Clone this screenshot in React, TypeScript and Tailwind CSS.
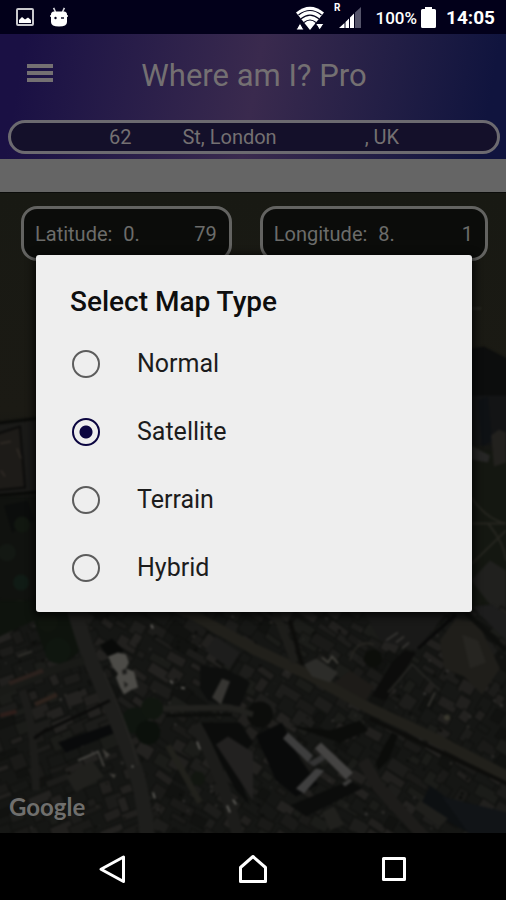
import React, { useState } from 'react';

const MAP_TYPES = ['Normal', 'Satellite', 'Terrain', 'Hybrid'];

// --- Map scenery ---
type Block = { x: number; y: number; w: number; h: number; angle: number; fill: string };

const ROOFS = ['#1a1a18', '#1d1d1b', '#21201e', '#161715', '#1c1c1a', '#111210', '#1b1c19', '#232220'];

const makeRandom = (start: number) => {
  let seed = start;
  return () => {
    seed = (seed * 16807) % 2147483647;
    return seed / 2147483647;
  };
};

const buildRoofs = () => {
  const rand = makeRandom(421);
  const blocks: Block[] = [];
  for (let y = 604; y < 840; y += 15) {
    for (let x = -6; x < 512; x += 18) {
      const westSide = x < 78 + (y - 615) * 0.34;
      blocks.push({
        x: x + rand() * 8 - 4,
        y: y + rand() * 6 - 3,
        w: 8 + rand() * 18,
        h: 5 + rand() * 11,
        angle: westSide ? -24 + rand() * 6 : 28 + rand() * 8,
        fill: ROOFS[Math.floor(rand() * ROOFS.length)],
      });
    }
  }
  return blocks;
};

const buildSpecks = () => {
  const rand = makeRandom(97);
  return Array.from({ length: 260 }, () => ({
    x: rand() * 506,
    y: 612 + rand() * 220,
    r: 1 + rand() * 2,
    angle: rand() * 90,
    fill: ['#0b0c0a', '#2b2a28', '#282724', '#0d0e0c', '#343331'][Math.floor(rand() * 5)],
  }));
};

const roofs = buildRoofs();
const specks = buildSpecks();

const SatelliteMap = () => (
  <svg
    className="absolute inset-0 h-full w-full"
    viewBox="0 192 506 641"
    preserveAspectRatio="xMidYMid slice"
    aria-hidden="true"
  >
    <defs>
      <linearGradient id="land" x1="0" y1="0" x2="0" y2="1">
        <stop offset="0" stopColor="#181913" />
        <stop offset="0.34" stopColor="#1b1a14" />
        <stop offset="0.4" stopColor="#151613" />
        <stop offset="1" stopColor="#141513" />
      </linearGradient>
      <filter id="soft" colorInterpolationFilters="sRGB">
        <feGaussianBlur stdDeviation="0.9" />
      </filter>
    </defs>
    <rect y="192" width="506" height="641" fill="url(#land)" />

    <g filter="url(#soft)">
      {/* west edge */}
      <path d="M-9 423 L45 417 V494 L-9 494Z" fill="#1a1a18" />
      <path d="M-5 434 L20 426 L25 487 L-5 490" fill="#1d1b18" stroke="#0b0b0a" strokeWidth="2" />
      <path d="M-5 423 L45 417 M-5 495 L45 491" stroke="#090a08" strokeWidth="3" />
      <path d="M0 443 L11 441 M17 448 L21 458 M1 470 L5 476" stroke="#2e2924" strokeWidth="2" />
      <path d="M-9 496 H45 V620 H-9Z" fill="#10120f" />
      <path d="M4 505 L28 500 L34 520 L12 532Z" fill="#0b0d0c" />
      <circle cx="22" cy="524" r="8" fill="#111710" />
      <circle cx="7" cy="552" r="9" fill="#131813" />
      <circle cx="21" cy="582" r="8" fill="#101b15" />
      <circle cx="20" cy="606" r="6" fill="#1d2019" />

      {/* east edge */}
      <path d="M465 349 L484 346 L515 362 V400 H465Z" fill="#0c0d0d" />
      <path d="M465 395 H515 V445 H465Z" fill="#131415" />
      <path d="M478 400 L488 396 L492 440 L482 446Z" fill="#0e1114" />
      <path d="M465 450 H515 V620 H465Z" fill="#141711" />
      <path d="M471 445 L490 455 L488 462 L471 459Z" fill="#262625" />
      <path d="M491 435 l8 -6 7 3 v30 l-12 4Z" fill="#22211e" />
      <path d="M471 497 Q488 520 506 523 M471 523 H506 M471 564 L506 530 M488 523 Q504 542 506 560" stroke="#25251f" strokeWidth="2" fill="none" />
      <path d="M471 580 L506 624 V570 L490 560Z" fill="#20201e" />
      <path d="M471 308 h10" stroke="#2a2a25" strokeWidth="2" />
    </g>

    <g filter="url(#soft)">
      <rect x="-9" y="611" width="524" height="232" fill="#151614" />
      {roofs.map((b, i) => (
        <rect
          key={i}
          x={b.x}
          y={b.y}
          width={b.w}
          height={b.h}
          fill={b.fill}
          stroke="#10110f"
          strokeWidth="1"
          transform={`rotate(${b.angle} ${b.x} ${b.y})`}
        />
      ))}
      {specks.map((s, i) => (
        <rect key={i} x={s.x} y={s.y} width={s.r} height={s.r} fill={s.fill} transform={`rotate(${s.angle} ${s.x} ${s.y})`} />
      ))}

      {/* trees */}
      <path d="M-9 600 H34 L72 612 L80 650 L62 666 L44 650 L34 620 L-9 640Z" fill="#0e130d" />
      <circle cx="58" cy="650" r="13" fill="#0f160f" />
      <circle cx="48" cy="622" r="10" fill="#10150e" />
      <circle cx="135" cy="720" r="13" fill="#0f150f" />
      <circle cx="152" cy="708" r="11" fill="#10160f" />
      <circle cx="148" cy="732" r="12" fill="#0b100b" />
      <circle cx="198" cy="778" r="7" fill="#121610" />

      {/* shadows */}
      <path d="M100 645 L112 638 L124 650 L112 662Z" fill="#090a09" />
      <path d="M58 742 L110 724 L116 732 L66 752Z" fill="#090a0b" />
      <path d="M196 722 L240 722 L253 742 L235 765 L250 805 L236 790 L212 745Z" fill="#0b0c0b" />
      <path d="M200 665 L225 668 L250 682 L240 706 L208 700 L200 688Z" fill="#0d0e0d" />
      <path d="M256 735 L282 722 L298 755 L318 784 L296 796 L276 780Z" fill="#090a0a" />
      <path d="M290 725 L340 742 L368 730 L360 720 L330 730Z" fill="#0b0c0a" />
      <path d="M416 652 L386 700 L372 695 L392 662 L404 650Z" fill="#0c0c0b" />
      <path d="M398 735 L388 760 L378 770 L376 762 L392 732Z" fill="#0b0c0a" />
      <path d="M290 805 L350 780 L362 788 L306 816Z" fill="#0b0c0b" />
      <path d="M430 785 L478 820 L470 833 L420 806Z" fill="#0d1012" />
      <circle cx="260" cy="714" r="13" fill="#0c0d0b" />
      <circle cx="373" cy="658" r="9" fill="#0c0e0a" />

      {/* streets */}
      <path d="M72 600 Q84 645 96 672 Q118 722 134 765 Q144 795 148 843" stroke="#1e1e1c" strokeWidth="15" fill="none" />
      <path d="M104 672 Q128 724 138 765" stroke="#2a2926" strokeWidth="1" fill="none" />
      <path d="M84 660 Q52 668 -6 694" stroke="#191a17" strokeWidth="8" fill="none" />
      <path d="M22 690 Q34 720 36 790" stroke="#1c1c1a" strokeWidth="8" fill="none" />
      <path d="M182 608 L253 648 L310 675 L370 708 L430 736 L515 780" stroke="#21201b" strokeWidth="11" fill="none" />
      <path d="M275 610 L295 662" stroke="#1d1d1a" strokeWidth="8" fill="none" />
      <path d="M290 620 L302 664 M370 718 L515 787" stroke="#0d0d0b" strokeWidth="4" fill="none" />
      <path d="M163 708 L230 707 L253 714" stroke="#21211e" strokeWidth="6" fill="none" />
      <path d="M166 715 L232 714" stroke="#0c0d0b" strokeWidth="3" />
      <path d="M168 745 L200 802" stroke="#21211c" strokeWidth="6" />
      <path d="M195 724 Q222 770 240 843" stroke="#1c1c1a" strokeWidth="12" fill="none" />
      <path d="M363 760 L378 786 L430 843" stroke="#1d1c1a" strokeWidth="12" fill="none" />
      <path d="M388 692 L412 664 L440 690" stroke="#232320" strokeWidth="2" fill="none" />
      <path d="M350 660 Q356 638 374 644" stroke="#262521" strokeWidth="2" fill="none" />

      {/* open ground on the east side */}
      <path d="M360 605 L452 605 L416 650 L380 640Z" fill="#191918" />
      <path d="M418 648 L456 614" stroke="#090909" strokeWidth="3" />
      <path d="M440 640 L456 618 L478 622 L500 668 L482 694 L464 676 L444 668Z" fill="#1f1e1a" />
      <path d="M462 634 L478 640 L486 662 L470 668Z" fill="#262521" />
      <path d="M466 612 L506 650" stroke="#0d0e0c" strokeWidth="5" />
      <path d="M472 606 L515 649 V620 L492 604Z" fill="#1d1d1d" />

      {/* terraces */}
      <path d="M8 681 L42 668 L44 672 L10 685Z" fill="#2b211d" />
      <path d="M34 702 L56 692 L58 696 L36 706Z" fill="#2e231d" />
      <path d="M0 713 L16 709 L17 713 L0 717Z" fill="#2f1e1a" />
      <path d="M18 656 l14 -5" stroke="#302f2b" strokeWidth="2" />
      <path d="M42 732 L110 700 M34 738 L48 728" stroke="#0b0b0a" strokeWidth="3" />
      <path d="M66 776 L92 760 L104 776 L76 792Z" fill="#20201d" />
      <path d="M78 760 L98 751 L104 766" stroke="#454440" strokeWidth="2" fill="none" />
      <path d="M109 773 l7 1 -2 4Z M102 748 l8 6 -4 4Z" fill="#403e3a" />
      <path d="M216 744 L228 736 L253 752 V800Z" fill="#222120" />
      <path d="M205 650 L216 636 L240 652 L230 668Z" fill="#1d1d1c" />
      <path d="M212 697 L222 678 L230 681 L221 704Z" fill="#363532" />
      <path d="M304 664 L316 658 L338 672 L330 682 L312 676Z" fill="#2c2c29" />
      <path d="M322 657 l6 5 4 -6 6 7" stroke="#403f3a" strokeWidth="2" fill="none" />
      <path d="M386 640 l12 -8 M396 642 l8 -6 M402 648 l7 -6" stroke="#353431" strokeWidth="2" />
      <path d="M334 682 L350 670 L374 686 L366 700Z" fill="#1d1b18" />
      <path d="M322 812 L334 806 L344 824 L330 830Z" fill="#20201d" />
      <path d="M442 796 L515 814 V843 H476Z" fill="#111417" />
      <path d="M428 706 l7 -14" stroke="#33322e" strokeWidth="2" />
      <circle cx="447" cy="717" r="3" fill="#38372d" />
      <path d="M420 800 L448 818 L440 826 L414 808Z" fill="#1f1f1c" />

      {/* parked cars */}
      <path d="M151 624 l2 4 M197 741 l3 8 M153 792 l2 6 M227 805 l3 7 M233 799 l3 5 M170 680 l3 3 M181 687 l4 1 M132 765 l1 2" stroke="#5a5955" strokeWidth="2" />

      {/* pale landmark buildings */}
      <path d="M108 656 l10 -4 8 2 3 8 -3 6 8 3 4 16 -6 2 -8 5 -4 -7 -4 -10 2 -4 -5 -6Z" fill="#4c4b47" />
      <path d="M122 670 l4 -2 1 5 -4 1Z M124 681 l4 3 -3 3Z" fill="#1a1a19" stroke="#31302d" />
      <path d="M283 738 L288 732 L313 755 L308 762Z" fill="#3d3d3d" />
      <path d="M315 748 L321 742 L353 772 L346 779Z" fill="#444342" />
      <path d="M308 762 L322 754 L325 759 L314 766Z" fill="#343434" />
      <path d="M296 788 L316 768 L324 770 L304 793Z" fill="#3f3f3f" />
      <path d="M342 783 l8 -5 2 3 -7 5Z" fill="#3a3a39" />
    </g>
  </svg>
);

// --- Status bar icons ---
const PictureIcon = () => (
  <svg width="18" height="18" viewBox="0 0 18 18" aria-hidden="true">
    <rect x="1" y="1" width="16" height="16" rx="1" fill="none" stroke="#c9c9cd" strokeWidth="2" />
    <path d="M3 15 V12 L6 9 L9 11.5 L12 9.5 L15 12 V15Z" fill="#fff" />
  </svg>
);

const AndroidIcon = () => (
  <svg width="18" height="20" viewBox="0 0 18 20" aria-hidden="true">
    <path d="M5.5 5 L3.6 .8 M12.5 5 L14.4 .8" stroke="#d8d8dc" strokeWidth="1.6" />
    <path d="M1 7.5 Q1 5 4 4.6 H14 Q17 5 17 7.5 V15 Q17 19.5 9 19.5 Q1 19.5 1 15Z" fill="#fff" />
    <path d="M0 9 H18" stroke="#fff" strokeWidth="1.5" />
    <circle cx="5.5" cy="11" r="1.2" fill="#02001a" />
    <path d="M11 11 H14" stroke="#02001a" strokeWidth="1.4" />
  </svg>
);

const WifiIcon = () => (
  <svg width="28" height="24" viewBox="0 0 28 24" aria-hidden="true">
    <path d="M0 6.5 Q14 -5 28 6.5 L14 24Z" fill="#fff" />
    <path d="M2.5 9 Q14 0 25.5 9 M5 12.8 Q14 5.5 23 12.800 M8 16.5 Q14 11.5 20 16.500" fill="none" stroke="#02001a" strokeWidth="1.2" />
    <path d="M0 24 L4 17 L8 24Z M19.5 17.5 H28 L23.7 24Z" fill="#fff" stroke="#02001a" strokeWidth="1" />
  </svg>
);

const SignalIcon = () => (
  <svg width="28" height="26" viewBox="0 0 28 26" aria-hidden="true">
    <path d="M5 25 L10.5 20 V25Z M11.5 19 L15 15.5 V25 H11.5Z M16 14.5 L20 10.5 V25 H16Z" fill="#fff" />
    <path d="M21 9.5 L27 4 V25 H21Z" fill="#55546a" />
    <text x="0" y="8" fontSize="10" fontWeight="700" fill="#fff" fontFamily="Roboto, sans-serif">R</text>
  </svg>
);

const BatteryIcon = () => (
  <svg width="15" height="21" viewBox="0 0 15 21" aria-hidden="true">
    <path d="M4 0 H11 V2 H13.5 Q15 2 15 3.5 V19.5 Q15 21 13.5 21 H1.5 Q0 21 0 19.5 V3.5 Q0 2 1.5 2 H4Z" fill="#fff" />
  </svg>
);

const App = () => {
  const [mapType, setMapType] = useState('Satellite');

  return (
    <div className="flex min-h-screen w-full flex-col bg-black font-[Roboto,sans-serif]">
      <div className="flex h-[34px] shrink-0 items-center justify-between bg-[#02001a] pr-[11px] pl-4 text-white">
        <div className="flex items-center gap-4">
          <PictureIcon />
          <AndroidIcon />
        </div>
        <div className="flex items-center pt-0.5">
          <WifiIcon />
          <span className="ml-[10px] pb-1">
            <SignalIcon />
          </span>
          <span className="ml-[14px] text-[17px] leading-6 font-medium">100%</span>
          <span className="ml-1 pb-0.5">
            <BatteryIcon />
          </span>
          <span className="ml-[10px] text-[19px] leading-6 font-bold">14:05</span>
        </div>
      </div>

      <div className="relative flex flex-1 flex-col">
        <header className="flex flex-col bg-linear-100 from-[#1a1044] from-5% via-[#3a2a4e] via-50% to-[#10143e] to-95% pr-[6px] pb-[5px] pl-2 text-[#747072]">
          <div className="grid h-[86px] grid-cols-[48px_1fr_48px] items-center">
            <button type="button" aria-label="Open menu" className="flex flex-col gap-[3px] pb-2 pl-[19px]">
              <span className="h-1 w-[26px] bg-[#747072]" />
              <span className="h-1 w-[26px] bg-[#747072]" />
              <span className="h-1 w-[26px] bg-[#747072]" />
            </button>
            <h1 className="pb-0.5 text-center text-[31px] leading-9">Where am I? Pro</h1>
          </div>
          <div className="flex h-[34px] items-center justify-center rounded-full border-3 border-[#6c6a70] bg-[#14102a] text-[20px] leading-6">
            <span className="mr-[51px]">62</span>
            <span className="mr-[88px]">St, London</span>
            <span>, UK</span>
          </div>
        </header>

        <div className="h-[33px] shrink-0 bg-[#656565]" />

        <main className="relative flex flex-1 flex-col justify-between overflow-hidden border-t border-[#0b0c0a]">
          <SatelliteMap />
          <div className="relative grid grid-cols-[12fr_13fr] gap-7 pt-[13px] pr-[18px] pl-[21px] text-[20px] leading-6 text-[#6c6c6a]">
            <div className="flex h-[55px] items-center rounded-2xl border-3 border-[#636361] bg-[#0b0c0a] pr-3 pl-[11px]">
              <span>Latitude:</span>
              <span className="ml-[11px]">0.</span>
              <span className="ml-auto">79</span>
            </div>
            <div className="flex h-[55px] items-center rounded-2xl border-3 border-[#636361] bg-[#0b0c0a] pr-3 pl-[11px]">
              <span>Longitude:</span>
              <span className="ml-[11px]">8.</span>
              <span className="ml-auto">1</span>
            </div>
          </div>
          <div className="relative px-[9px] pb-[10px] font-[Lato,sans-serif] text-[24px] leading-8 font-bold text-[#706f6d]">
            Google
          </div>
        </main>

        {/* Map type dialog */}
        <div className="absolute inset-0 flex items-center justify-center pr-[34px] pl-9">
          <div
            role="dialog"
            aria-labelledby="dialog-title"
            className="w-full rounded-[3px] bg-[#eeeeee] pb-[10px] shadow-[0_2px_8px_2px_rgba(0,0,0,0.8)]"
          >
            <h2 id="dialog-title" className="px-[34px] pt-[29px] pb-[10px] text-[28px] leading-9 font-medium text-[#0e0e0e]">
              Select Map Type
            </h2>
            {MAP_TYPES.map(type => (
              <label key={type} className="flex h-[68px] cursor-pointer items-center px-9">
                <input
                  type="radio"
                  name="map-type"
                  value={type}
                  checked={mapType === type}
                  onChange={() => setMapType(type)}
                  className="size-7 shrink-0 appearance-none rounded-full border-2 border-[#5c5c5c] checked:border-[#0b0540] checked:bg-[radial-gradient(circle,#0b0540_6px,transparent_7px)]"
                />
                <span className="ml-[37px] text-[25px] leading-8 text-[#1c1c1c]">{type}</span>
              </label>
            ))}
          </div>
        </div>
      </div>

      <nav className="grid h-[67px] shrink-0 grid-cols-[141px_141px_141px] items-center justify-center bg-black pt-1">
        <button type="button" aria-label="Back" className="flex justify-center">
          <svg width="28" height="30" viewBox="0 0 28 30" fill="none" stroke="#fff" strokeWidth="3" strokeLinejoin="round">
            <path d="M25.5 3 V27.5 L3 15.2Z" />
          </svg>
        </button>
        <button type="button" aria-label="Home" className="flex justify-center">
          <svg width="30" height="30" viewBox="0 0 30 30" fill="none" stroke="#fff" strokeWidth="3" strokeLinejoin="round">
            <path d="M2.5 27.5 V13.5 L15 2.5 L27.5 13.5 V27.5Z" />
          </svg>
        </button>
        <button type="button" aria-label="Recent apps" className="flex justify-center">
          <svg width="26" height="26" viewBox="0 0 26 26" fill="none" stroke="#fff" strokeWidth="3" strokeLinejoin="round">
            <rect x="2.5" y="2.5" width="21" height="21" />
          </svg>
        </button>
      </nav>
    </div>
  );
};

export default App;
